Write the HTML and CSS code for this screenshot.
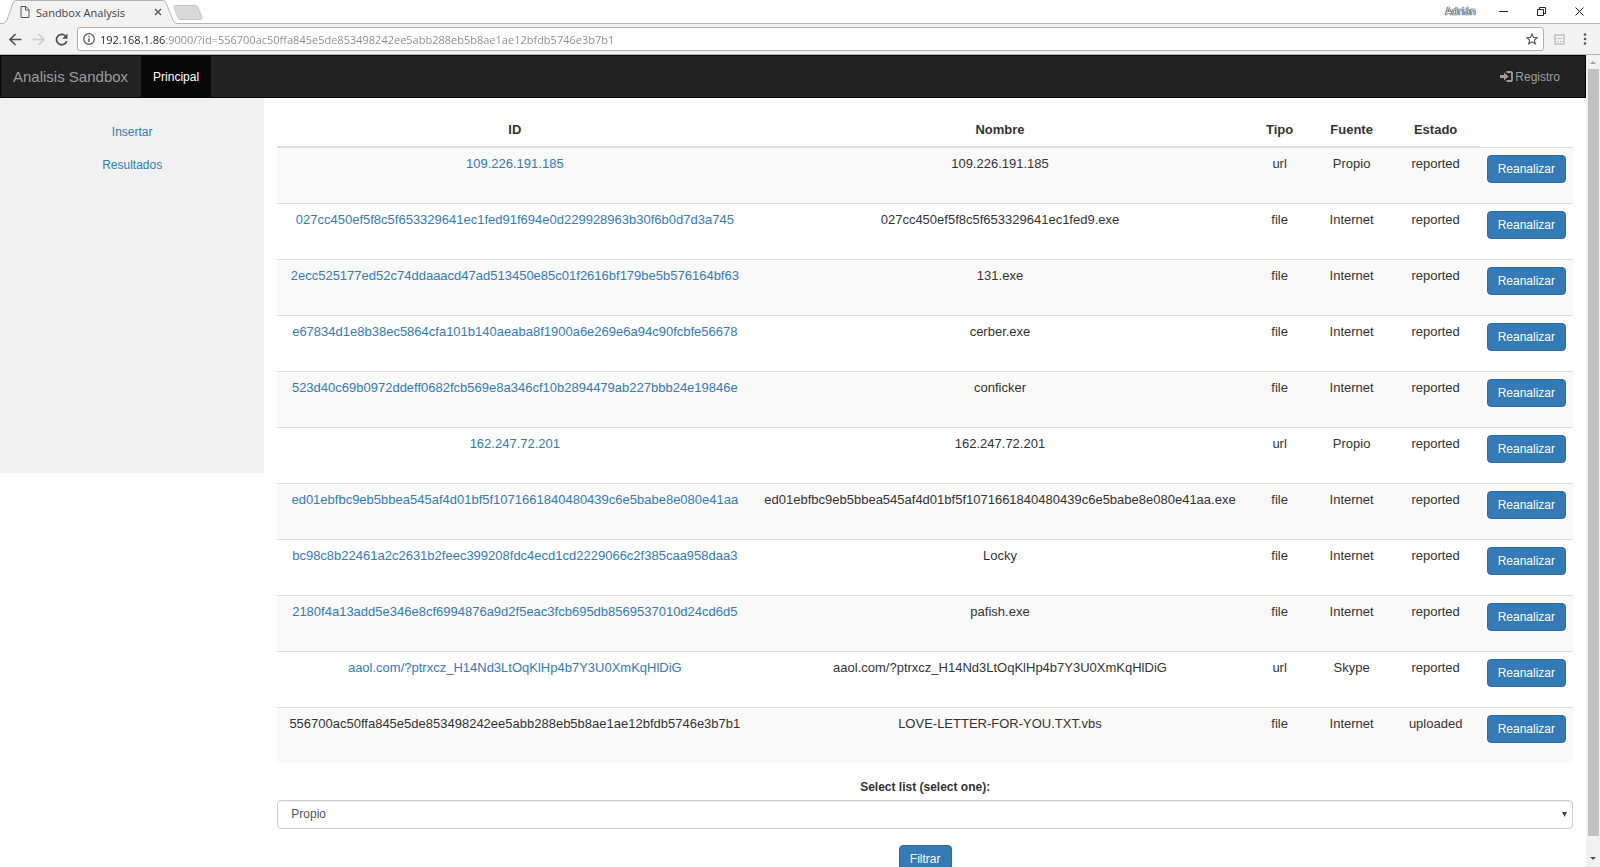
FILE: index.html
```html
<!DOCTYPE html>
<html lang="es">
<head>
    <meta charset="UTF-8">
    <meta name="viewport" content="width=device-width, initial-scale=1.0">
    <title>Sandbox Analysis</title>
    <link rel="stylesheet" href="styles.css">
</head>
<body>
    <div class="tabstrip">
        <div class="tab">
            <svg class="tab-shape" width="174" height="24" viewBox="0 0 174 24" aria-hidden="true">
                <path d="M0 24 L1 23 Q3 23 4 20 L10 3 Q11 .5 13 .5 H160 Q162 .5 163 3 L170 20 Q171 23 173 23 L174 24 Z" fill="#f2f2f2"/>
                <path d="M0 23.5 Q3 23 4 20 L10 3 Q11 .5 13 .5 H160 Q162 .5 163 3 L170 20 Q171 23 174 23.5" fill="none" stroke="#b5b5b5"/>
            </svg>
            <svg class="tab-icon" width="10" height="12" viewBox="0 0 10 12" aria-hidden="true">
                <path d="M1 .5 H6 L9 3.5 V11.5 H1 Z M5.500 .5 V4 H9" fill="none" stroke="#5a5a5a"/>
            </svg>
            <span class="tab-title">Sandbox Analysis</span>
            <button class="icon-btn" aria-label="Cerrar pestaña">
                <svg width="8" height="8" viewBox="0 0 8 8"><path d="M1 1 L7 7 M7 1 L1 7" stroke="#555" stroke-width="1.400"/></svg>
            </button>
        </div>
        <button class="icon-btn new-tab" aria-label="Nueva pestaña">
            <svg width="30" height="15" viewBox="0 0 30 15"><path d="M2.500 .5 H22 Q24 .5 25 2.500 L29 12 Q29.500 14.500 27 14.500 H8 Q6 14.500 5 12.500 L1 2.500 Q.5 .5 2.500 .5 Z" fill="#d8d8d8" stroke="#c6c6c6"/></svg>
        </button>
        <div class="window-controls">
            <span class="profile">Adrián</span>
            <button class="icon-btn" aria-label="Minimizar">
                <svg width="9" height="9" viewBox="0 0 9 9"><path d="M0 4.500 H9" stroke="#222"/></svg>
            </button>
            <button class="icon-btn" aria-label="Restaurar">
                <svg width="9" height="9" viewBox="0 0 9 9"><path d="M.5 2.500 H6.500 V8.500 H.5 Z M2.500 2.500 V.5 H8.500 V6.500 H6.500" fill="none" stroke="#222"/></svg>
            </button>
            <button class="icon-btn" aria-label="Cerrar">
                <svg width="9" height="9" viewBox="0 0 9 9"><path d="M.5 .5 L8.500 8.500 M8.500 .5 L.5 8.500" stroke="#222"/></svg>
            </button>
        </div>
    </div>

    <div class="toolbar">
        <button class="icon-btn" aria-label="Atrás">
            <svg width="13" height="13" viewBox="0 0 13 13"><path d="M12.500 6.500 H1.500 M6.500 1 L1 6.500 L6.500 12" fill="none" stroke="#505050" stroke-width="1.600"/></svg>
        </button>
        <button class="icon-btn" aria-label="Adelante">
            <svg width="13" height="13" viewBox="0 0 13 13"><path d="M.5 6.500 H11.500 M6.500 1 L12 6.500 L6.500 12" fill="none" stroke="#ccc" stroke-width="1.600"/></svg>
        </button>
        <button class="icon-btn" aria-label="Recargar">
            <svg width="13" height="13" viewBox="0 0 13 13"><path d="M10.500 3 A5.200 5.200 0 1 0 11.700 8" fill="none" stroke="#505050" stroke-width="1.700"/><path d="M12.500 .5 V5.800 H7.200 Z" fill="#505050"/></svg>
        </button>
        <div class="omnibox">
            <svg width="12" height="12" viewBox="0 0 12 12" aria-hidden="true"><circle cx="6" cy="6" r="5.300" fill="none" stroke="#555" stroke-width="1.200"/><path d="M6 5.200 V9 M6 2.800 V4.200" stroke="#555" stroke-width="1.400"/></svg>
            <input class="url" type="text" aria-label="Dirección" value="192.168.1.86:9000/?id=556700ac50ffa845e5de853498242ee5abb288eb5b8ae1ae12bfdb5746e3b7b1">
            <button class="icon-btn" aria-label="Favorito">
                <svg width="12" height="12" viewBox="0 0 12 12"><path d="M6 1 L7.500 4.400 L11.200 4.700 L8.400 7.100 L9.300 10.800 L6 8.800 L2.700 10.800 L3.600 7.100 L.8 4.700 L4.500 4.400 Z" fill="none" stroke="#555" stroke-width="1.100"/></svg>
            </button>
        </div>
        <button class="icon-btn" aria-label="Extensión">
            <svg width="11" height="11" viewBox="0 0 11 11"><path d="M1 1 H10 V10 H1 Z" fill="none" stroke="#c0c0c0" stroke-width="1.500"/><path d="M3 4.500 H8 M3 7.500 H5 M6 7.500 H8" stroke="#c0c0c0"/></svg>
        </button>
        <button class="icon-btn menu-btn" aria-label="Menú">
            <svg width="4" height="12" viewBox="0 0 4 12"><g fill="#555"><circle cx="2" cy="1.500" r="1.300"/><circle cx="2" cy="6" r="1.300"/><circle cx="2" cy="10.500" r="1.300"/></g></svg>
        </button>
    </div>

    <div class="viewport">
        <div class="page">
            <nav class="navbar">
                <a class="navbar-brand" href="#">Analisis Sandbox</a>
                <a class="nav-link active" href="#">Principal</a>
                <a class="nav-link nav-right" href="#">
                    <svg width="13" height="11" viewBox="0 0 13 11" aria-hidden="true"><path d="M0 4 H4 V1.500 L8.500 5.500 L4 9.500 V7 H0 Z" fill="#9d9d9d"/><path d="M6.500 1 H11 Q12 1 12 2 V9 Q12 10 11 10 H6.500" fill="none" stroke="#9d9d9d" stroke-width="1.800"/></svg>
                    Registro
                </a>
            </nav>

            <div class="row">
                <div class="sidenav">
                    <p><a href="#">Insertar</a></p>
                    <p><a href="#">Resultados</a></p>
                </div>

                <div class="content">
                    <table class="table">
                        <colgroup>
                            <col class="col-id">
                            <col>
                            <col class="col-tipo">
                            <col class="col-fuente">
                            <col class="col-estado">
                            <col class="col-accion">
                        </colgroup>
                        <thead>
                            <tr>
                                <th>ID</th>
                                <th>Nombre</th>
                                <th>Tipo</th>
                                <th>Fuente</th>
                                <th>Estado</th>
                            </tr>
                        </thead>
                        <tbody>
                            <tr>
                                <td><a href="#">109.226.191.185</a></td>
                                <td>109.226.191.185</td>
                                <td>url</td>
                                <td>Propio</td>
                                <td>reported</td>
                                <td><form><button type="button" class="btn">Reanalizar</button></form></td>
                            </tr>
                            <tr>
                                <td><a href="#">027cc450ef5f8c5f653329641ec1fed91f694e0d229928963b30f6b0d7d3a745</a></td>
                                <td>027cc450ef5f8c5f653329641ec1fed9.exe</td>
                                <td>file</td>
                                <td>Internet</td>
                                <td>reported</td>
                                <td><form><button type="button" class="btn">Reanalizar</button></form></td>
                            </tr>
                            <tr>
                                <td><a href="#">2ecc525177ed52c74ddaaacd47ad513450e85c01f2616bf179be5b576164bf63</a></td>
                                <td>131.exe</td>
                                <td>file</td>
                                <td>Internet</td>
                                <td>reported</td>
                                <td><form><button type="button" class="btn">Reanalizar</button></form></td>
                            </tr>
                            <tr>
                                <td><a href="#">e67834d1e8b38ec5864cfa101b140aeaba8f1900a6e269e6a94c90fcbfe56678</a></td>
                                <td>cerber.exe</td>
                                <td>file</td>
                                <td>Internet</td>
                                <td>reported</td>
                                <td><form><button type="button" class="btn">Reanalizar</button></form></td>
                            </tr>
                            <tr>
                                <td><a href="#">523d40c69b0972ddeff0682fcb569e8a346cf10b2894479ab227bbb24e19846e</a></td>
                                <td>conficker</td>
                                <td>file</td>
                                <td>Internet</td>
                                <td>reported</td>
                                <td><form><button type="button" class="btn">Reanalizar</button></form></td>
                            </tr>
                            <tr>
                                <td><a href="#">162.247.72.201</a></td>
                                <td>162.247.72.201</td>
                                <td>url</td>
                                <td>Propio</td>
                                <td>reported</td>
                                <td><form><button type="button" class="btn">Reanalizar</button></form></td>
                            </tr>
                            <tr>
                                <td><a href="#">ed01ebfbc9eb5bbea545af4d01bf5f1071661840480439c6e5babe8e080e41aa</a></td>
                                <td>ed01ebfbc9eb5bbea545af4d01bf5f1071661840480439c6e5babe8e080e41aa.exe</td>
                                <td>file</td>
                                <td>Internet</td>
                                <td>reported</td>
                                <td><form><button type="button" class="btn">Reanalizar</button></form></td>
                            </tr>
                            <tr>
                                <td><a href="#">bc98c8b22461a2c2631b2feec399208fdc4ecd1cd2229066c2f385caa958daa3</a></td>
                                <td>Locky</td>
                                <td>file</td>
                                <td>Internet</td>
                                <td>reported</td>
                                <td><form><button type="button" class="btn">Reanalizar</button></form></td>
                            </tr>
                            <tr>
                                <td><a href="#">2180f4a13add5e346e8cf6994876a9d2f5eac3fcb695db8569537010d24cd6d5</a></td>
                                <td>pafish.exe</td>
                                <td>file</td>
                                <td>Internet</td>
                                <td>reported</td>
                                <td><form><button type="button" class="btn">Reanalizar</button></form></td>
                            </tr>
                            <tr>
                                <td><a href="#">aaol.com/?ptrxcz_H14Nd3LtOqKlHp4b7Y3U0XmKqHlDiG</a></td>
                                <td>aaol.com/?ptrxcz_H14Nd3LtOqKlHp4b7Y3U0XmKqHlDiG</td>
                                <td>url</td>
                                <td>Skype</td>
                                <td>reported</td>
                                <td><form><button type="button" class="btn">Reanalizar</button></form></td>
                            </tr>
                            <tr>
                                <td>556700ac50ffa845e5de853498242ee5abb288eb5b8ae1ae12bfdb5746e3b7b1</td>
                                <td>LOVE-LETTER-FOR-YOU.TXT.vbs</td>
                                <td>file</td>
                                <td>Internet</td>
                                <td>uploaded</td>
                                <td><form><button type="button" class="btn">Reanalizar</button></form></td>
                            </tr>
                        </tbody>
                    </table>

                    <form class="filter">
                        <label for="fuente">Select list (select one):</label>
                        <div class="select-wrap">
                            <select id="fuente">
                                <option>Propio</option>
                                <option>Internet</option>
                                <option>Skype</option>
                            </select>
                            <svg class="caret" width="5" height="5" viewBox="0 0 5 5" aria-hidden="true"><path d="M0 0 H5 L2.500 5 Z" fill="#444"/></svg>
                        </div>
                        <button type="button" class="btn">Filtrar</button>
                    </form>
                </div>
            </div>
        </div>

        <div class="scrollbar" aria-hidden="true">
            <svg width="6" height="14" viewBox="0 0 6 14"><path d="M0 9 L3 6 L6 9 Z" fill="#a3a3a3"/></svg>
            <div class="thumb"></div>
            <svg width="6" height="31" viewBox="0 0 6 31"><path d="M0 21 L3 24 L6 21 Z" fill="#505050"/></svg>
        </div>
    </div>
</body>
</html>
```
FILE: styles.css
```css
* {
    box-sizing: border-box;
}
body {
    margin: 0;
    height: 100vh;
    display: flex;
    flex-direction: column;
    overflow: hidden;
    font-family: "Liberation Sans", Arial, sans-serif;
    font-size: 12px;
    line-height: 17px;
    color: #333;
    background-color: #fff;
}
a {
    color: #337ab7;
    text-decoration: none;
}
svg {
    display: block;
    flex: none;
}

/* browser window */
.icon-btn {
    padding: 0;
    border: 0;
    background: none;
    cursor: pointer;
}
.tabstrip {
    flex: none;
    display: flex;
    align-items: center;
    height: 24px;
    padding-left: 3px;
    border-bottom: 1px solid #b5b5b5;
    font-family: "Open Sans", sans-serif;
    font-size: 11px;
}
.tab {
    position: relative;
    display: flex;
    align-items: center;
    width: 174px;
    height: 24px;
    padding: 0 15px 0 17px;
    gap: 6px;
    margin-bottom: -1px;
}
.tab-shape {
    position: absolute;
    left: 0;
    top: 0;
}
.tab-icon,
.tab-title,
.tab .icon-btn {
    position: relative;
}
.tab-title {
    flex: 1;
    color: #444;
}
.new-tab {
    margin: 2px 0 0 -4px;
}
.window-controls {
    display: flex;
    align-items: center;
    gap: 29px;
    margin-left: auto;
    padding-right: 16px;
}
.profile {
    margin-right: -6px;
    font-size: 10px;
    color: #fff;
    text-shadow: 0 0 1px #000, 0 0 1px #000, 0 0 1px #000;
}
.toolbar {
    flex: none;
    display: flex;
    align-items: center;
    gap: 10px;
    height: 31px;
    padding: 0 13px 0 9px;
    background-color: #f2f2f2;
    border-bottom: 1px solid #b5b5b5;
}
.omnibox {
    flex: 1;
    display: flex;
    align-items: center;
    gap: 5px;
    height: 24px;
    margin-left: -1px;
    padding: 0 5px;
    border: 1px solid #b0b0b0;
    border-radius: 3px;
    background-color: #fff;
}
.url {
    flex: 1;
    padding: 0;
    border: 0;
    outline: 0;
    font-family: "Open Sans", sans-serif;
    font-size: 11px;
    color: transparent;
    background: linear-gradient(to right, #222 66px, #888 66px);
    -webkit-background-clip: text;
    background-clip: text;
}
.menu-btn {
    margin-left: 8px;
}

/* page */
.viewport {
    flex: 1;
    display: flex;
    min-height: 0;
}
.page {
    flex: 1;
    min-width: 0;
    overflow: hidden;
}
.navbar {
    display: flex;
    height: 43px;
    padding-right: 13px;
    background-color: #222;
    border: 1px solid #080808;
}
.navbar a {
    display: flex;
    align-items: center;
    padding: 0 12px;
    line-height: 18px;
    color: #9d9d9d;
}
.navbar .navbar-brand {
    padding: 0 13px 0 12px;
    font-size: 15px;
}
.navbar .active {
    color: #fff;
    background-color: #080808;
}
.navbar .nav-right {
    gap: 2px;
    margin-left: auto;
}
.row {
    display: flex;
    align-items: flex-start;
    text-align: center;
}
.sidenav {
    flex: none;
    width: calc(100% / 6);
    height: 375px;
    padding-top: 26px;
    background-color: #f1f1f1;
}
.sidenav p {
    margin: 0 0 16px;
}
.content {
    flex: 1;
    min-width: 0;
    padding: 15px 13px;
}
.table {
    width: 100%;
    margin-bottom: 16px;
    border-collapse: collapse;
    font-size: 13px;
    line-height: 17px;
}
.col-id {
    width: 475px;
}
.col-tipo {
    width: 64px;
}
.col-fuente {
    width: 80px;
}
.col-estado {
    width: 88px;
}
.col-accion {
    width: 90px;
}
.table th {
    padding: 8px 7px;
    border-bottom: 2px solid #ddd;
}
.table td {
    padding: 7px;
    border-top: 1px solid #ddd;
    vertical-align: top;
}
.table td form {
    margin: 0 0 13px;
}
.table tbody tr:nth-child(odd) {
    background-color: #f9f9f9;
}
.btn {
    display: block;
    height: 28px;
    padding: 0 10px;
    border: 1px solid #2e6da4;
    border-radius: 4px;
    font-family: inherit;
    font-size: 12px;
    color: #fff;
    background-color: #337ab7;
    cursor: pointer;
}
.table .btn {
    width: 100%;
}
.filter label {
    display: block;
    margin-bottom: 4px;
    font-size: 12px;
    font-weight: bold;
}
.select-wrap {
    position: relative;
    margin-bottom: 16px;
}
.filter select {
    width: 100%;
    height: 29px;
    padding: 0 13px;
    border: 1px solid #ccc;
    border-radius: 4px;
    font-family: inherit;
    font-size: 12px;
    color: #555;
    background-color: #fff;
    box-shadow: inset 0 1px 1px rgba(0, 0, 0, 0.075);
    appearance: none;
}
.caret {
    position: absolute;
    right: 6px;
    top: 12px;
}
.filter .btn {
    margin: 0 auto;
}
.scrollbar {
    flex: none;
    display: flex;
    flex-direction: column;
    align-items: center;
    width: 14px;
    background-color: #f1f1f1;
}
.thumb {
    flex: 1;
    width: 11px;
    background-color: #c1c1c1;
}
```
